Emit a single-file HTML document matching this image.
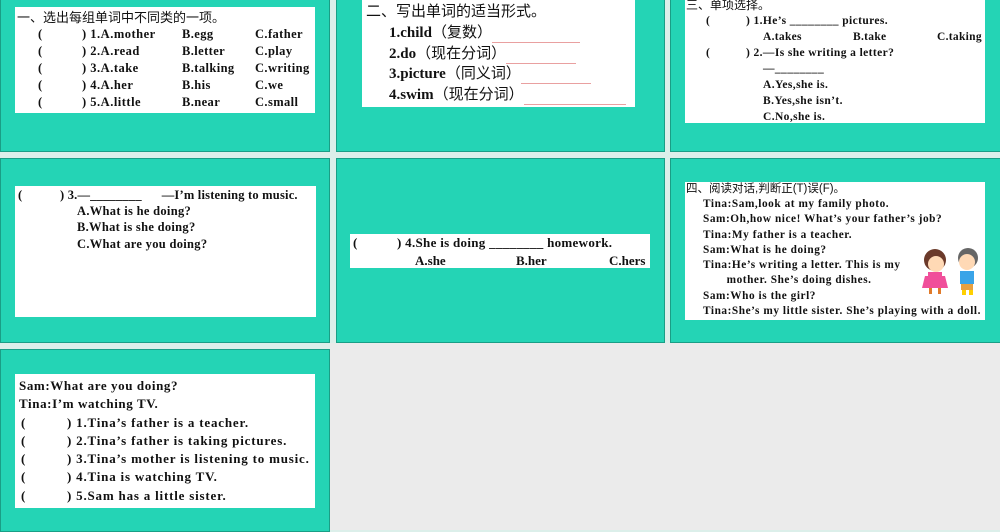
<!DOCTYPE html>
<html><head><meta charset="utf-8"><style>
*{margin:0;padding:0;box-sizing:border-box}
body{width:1000px;height:530px;background:#dcefea;position:relative;overflow:hidden;font-family:"Liberation Serif","Noto Serif CJK SC",serif;color:#111}
.s{position:absolute;background:#24d4b5;border:1px solid #1a9e86}
.w{position:absolute;background:#fff}
.t{position:absolute;white-space:pre;font-weight:bold;font-size:12.5px;line-height:17px}
.l{position:absolute;white-space:pre;font-weight:bold;font-size:15px;line-height:20px;height:20px}
.cn{font-family:"Liberation Sans","Noto Sans CJK SC",sans-serif;font-weight:normal}
.u{display:inline-block;border-bottom:1px solid #e9a0a0;height:14px;vertical-align:bottom}
</style></head><body>
<div style="position:absolute;left:330px;top:343px;width:670px;height:187px;background:#ebebeb"></div>
<div class="s" style="left:0;top:-2px;width:330px;height:154px"></div>
<div class="s" style="left:336px;top:-2px;width:329px;height:154px"></div>
<div class="s" style="left:670px;top:-2px;width:332px;height:154px"></div>
<div class="s" style="left:0;top:158px;width:330px;height:185px"></div>
<div class="s" style="left:336px;top:158px;width:329px;height:185px"></div>
<div class="s" style="left:670px;top:158px;width:332px;height:185px"></div>
<div class="s" style="left:0;top:349px;width:330px;height:183px"></div>

<div class="w" style="left:15px;top:7px;width:300px;height:106px"></div>
<div class="t cn" style="left:17px;top:9px;font-size:13px">一、选出每组单词中不同类的一项。</div>
<div class="t" style="left:38px;top:26px">(
(
(
(
(</div>
<div class="t" style="left:82px;top:26px;letter-spacing:0.5px">) 1.A.mother
) 2.A.read
) 3.A.take
) 4.A.her
) 5.A.little</div>
<div class="t" style="left:182px;top:26px;letter-spacing:0.4px">B.egg
B.letter
B.talking
B.his
B.near</div>
<div class="t" style="left:255px;top:26px;letter-spacing:0.4px">C.father
C.play
C.writing
C.we
C.small</div>

<div class="w" style="left:362px;top:0;width:273px;height:107px"></div>
<div class="l cn" style="left:366px;top:2px;font-weight:normal">二、写出单词的适当形式。</div>
<div class="l" style="left:389px;top:23px">1.child<span class="cn">（复数）</span><span class="u" style="width:88px"></span></div>
<div class="l" style="left:389px;top:44px">2.do<span class="cn">（现在分词）</span><span class="u" style="width:70px"></span></div>
<div class="l" style="left:389px;top:64px">3.picture<span class="cn">（同义词）</span><span class="u" style="width:70px"></span></div>
<div class="l" style="left:389px;top:85px">4.swim<span class="cn">（现在分词）</span><span class="u" style="width:102px"></span></div>

<div class="w" style="left:685px;top:0;width:300px;height:123px"></div>
<div class="t cn" style="left:686px;top:-3px;font-size:12px">三、单项选择。</div>
<div class="t" style="left:706px;top:13px;font-size:11.5px;line-height:16px">(

(</div>
<div class="t" style="left:746px;top:13px;font-size:11.5px;line-height:16px;letter-spacing:0.4px">) 1.He’s ________ pictures.

) 2.—Is she writing a letter?</div>
<div class="t" style="left:763px;top:29px;font-size:11.5px;line-height:16px;letter-spacing:0.3px">A.takes</div>
<div class="t" style="left:853px;top:29px;font-size:11.5px;line-height:16px;letter-spacing:0.3px">B.take</div>
<div class="t" style="left:937px;top:29px;font-size:11.5px;line-height:16px;letter-spacing:0.3px">C.taking</div>
<div class="t" style="left:763px;top:61px;font-size:11.5px;line-height:16px;letter-spacing:0.4px">—________
A.Yes,she is.
B.Yes,she isn’t.
C.No,she is.</div>

<div class="w" style="left:15px;top:186px;width:301px;height:131px"></div>
<div class="t" style="left:18px;top:187px;font-size:12.5px;line-height:16.3px">(</div>
<div class="t" style="left:60px;top:187px;font-size:12.5px;line-height:16.3px;letter-spacing:0.2px">) 3.—________      —I’m listening to music.</div>
<div class="t" style="left:77px;top:203px;font-size:12.5px;line-height:16.3px;letter-spacing:0.3px">A.What is he doing?
B.What is she doing?
C.What are you doing?</div>

<div class="w" style="left:350px;top:234px;width:300px;height:34px"></div>
<div class="t" style="left:353px;top:234px;font-size:13px;line-height:18px">(</div>
<div class="t" style="left:397px;top:234px;font-size:13px;line-height:18px;letter-spacing:0.3px">) 4.She is doing ________ homework.</div>
<div class="t" style="left:415px;top:252px;font-size:13px">A.she</div>
<div class="t" style="left:516px;top:252px;font-size:13px">B.her</div>
<div class="t" style="left:609px;top:252px;font-size:13px">C.hers</div>

<div class="w" style="left:685px;top:182px;width:300px;height:138px"></div>
<div class="t cn" style="left:686px;top:182px;font-size:11.5px;line-height:15px">四、阅读对话,判断正(T)误(F)。</div>
<div class="t" style="left:703px;top:197px;font-size:11.3px;line-height:15.3px;letter-spacing:0.55px">Tina:Sam,look at my family photo.
Sam:Oh,how nice! What’s your father’s job?
Tina:My father is a teacher.
Sam:What is he doing?
Tina:He’s writing a letter. This is my
       mother. She’s doing dishes.
Sam:Who is the girl?
Tina:She’s my little sister. She’s playing with a doll.</div>
<svg style="position:absolute;left:918px;top:240px" width="68" height="56" viewBox="0 0 68 56">
<circle cx="17" cy="20" r="11" fill="#6b3a2a"/><circle cx="18" cy="24" r="8" fill="#ffd9b5"/>
<path d="M7 36 L27 36 L30 48 L4 48Z" fill="#f04f9a"/><rect x="10" y="32" width="14" height="8" fill="#f04f9a"/>
<rect x="11" y="48" width="3" height="6" fill="#e07a2a"/><rect x="20" y="48" width="3" height="6" fill="#e07a2a"/>
<circle cx="50" cy="18" r="10" fill="#666"/><circle cx="49" cy="22" r="8" fill="#ffd9b5"/>
<rect x="42" y="31" width="14" height="13" fill="#3aa4e8"/><rect x="43" y="44" width="12" height="6" fill="#e8a040"/>
<rect x="44" y="50" width="4" height="5" fill="#ffd000"/><rect x="51" y="50" width="4" height="5" fill="#ffd000"/>
</svg>

<div class="w" style="left:15px;top:374px;width:300px;height:134px"></div>
<div class="t" style="left:19px;top:377px;font-size:13px;line-height:18.3px;letter-spacing:0.6px">Sam:What are you doing?
Tina:I’m watching TV.</div>
<div class="t" style="left:21px;top:413.6px;font-size:13px;line-height:18.3px">(
(
(
(
(</div>
<div class="t" style="left:67px;top:413.6px;font-size:13px;line-height:18.3px;letter-spacing:0.8px">) 1.Tina’s father is a teacher.
) 2.Tina’s father is taking pictures.
) 3.Tina’s mother is listening to music.
) 4.Tina is watching TV.
) 5.Sam has a little sister.</div>
</body></html>
